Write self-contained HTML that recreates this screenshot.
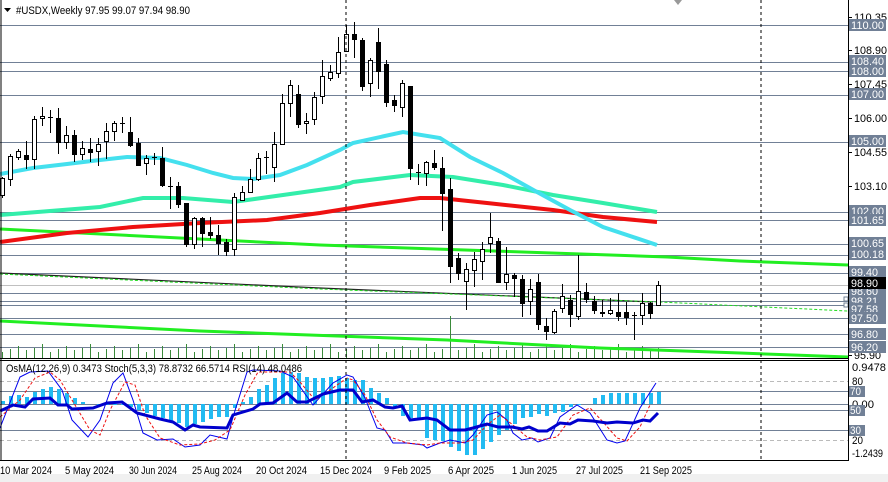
<!DOCTYPE html>
<html><head><meta charset="utf-8">
<style>
html,body{margin:0;padding:0;background:#fff;}
body{width:888px;height:482px;overflow:hidden;position:relative;font-family:"Liberation Sans",sans-serif;}
svg{position:absolute;left:0;top:0;}
</style></head><body>
<svg id="s" width="888" height="482" xmlns="http://www.w3.org/2000/svg" font-family="Liberation Sans, sans-serif" font-size="11">
<rect x="0" y="0" width="888" height="482" fill="#fff"/>
<rect x="0" y="474" width="888" height="8" fill="#f0f0f0"/>
<g id="hl"></g>
<g id="vol"></g>
<g id="ma" fill="none"></g>
<g id="cd"></g>
<g id="ind"></g>
<g id="ax"></g>
<line x1="761" y1="0" x2="761" y2="460" stroke="#000" stroke-dasharray="3,3"/>
<line x1="346" y1="0" x2="346" y2="460" stroke="#000" stroke-dasharray="3,3"/>
<line x1="1" y1="0" x2="1" y2="460" stroke="#000"/>
<line x1="848.5" y1="0" x2="848.5" y2="460" stroke="#000"/>
<line x1="0" y1="358.5" x2="849" y2="358.5" stroke="#000"/>
<line x1="0" y1="360.5" x2="849" y2="360.5" stroke="#000"/>
<line x1="0" y1="460.5" x2="849" y2="460.5" stroke="#000"/>
<polygon points="674,0 682,0 678,5" fill="#999"/>
<polygon points="4,8 11,8 7.5,12" fill="#000"/>
<text x="16" y="14" fill="#000" textLength="174" lengthAdjust="spacingAndGlyphs">#USDX,Weekly  97.95 99.07 97.94 98.90</text>
<text x="6" y="372" fill="#000" textLength="296" lengthAdjust="spacingAndGlyphs">OsMA(12,26,9) 0.3473   Stoch(5,3,3) 78.8732 66.5714   RSI(14) 48.0486</text>
<g font-size="11" fill="#000" id="dates"></g>
</svg>
<script>
var NS="http://www.w3.org/2000/svg";
function el(p,t,a,txt){var e=document.createElementNS(NS,t);for(var k in a)e.setAttribute(k,a[k]);if(txt!==undefined)e.textContent=txt;document.getElementById(p).appendChild(e);return e;}
[[0,52,"10 Mar 2024"],[65,49,"5 May 2024"],[129,48,"30 Jun 2024"],[192,50,"25 Aug 2024"],[256,51,"20 Oct 2024"],[320,52,"15 Dec 2024"],[384,47,"9 Feb 2025"],[448,46,"6 Apr 2025"],[512,45,"1 Jun 2025"],[576,47,"27 Jul 2025"],[640,52,"21 Sep 2025"]].forEach(function(d){el("dates","text",{x:d[0],y:474,textLength:d[1],lengthAdjust:"spacingAndGlyphs"},d[2]);});
var G="#718096";
[25,62,71,95,142,212,220,244,255,273,293,301,305,318,334,347].forEach(function(y){el("hl","line",{x1:0,x2:848,y1:y+.5,y2:y+.5,stroke:G});});
el("hl","line",{x1:0,x2:848,y1:285.5,y2:285.5,stroke:"#c0c0c0"});
for(var i=0;i<83;i++){var x=2+8*i;var h=[6,9,12,8,10,14][i%6];if(i==56)h=42;el("vol","line",{x1:x+.5,x2:x+.5,y1:358-h,y2:358,stroke:"#3a8a3a","stroke-width":1});}
function pl(p,pts,c,w,d){var a={points:pts,stroke:c,"stroke-width":w,fill:"none"};if(d)a["stroke-dasharray"]=d;el(p,"polyline",a);}
pl("ma","0,321 200,331 447,340 600,348 740,353 848,357","#22ee22",3);
pl("ma","0,273 320,288 653,302","#222",1.2);
pl("ma","0,274 320,289 660,302 848,311","#22dd22",1,"3,2");
pl("ma","0,229 320,245 667,257 740,261 848,265","#22ee22",3);
pl("ma","0,242 67,233 133,227 200,223 267,220 320,213 370,205 420,198 440,198 487,203 553,210 603,217 657,222","#ee1111",4);
pl("ma","0,215 100,207 143,198 183,198 233,202 283,195 340,187 353,182 410,175 453,177 503,185 553,195 603,203 657,212","#33eeaa",4);
pl("ma","0,174 33,168 67,164 100,160 127,157 160,158 187,165 213,173 233,178 253,179 280,175 307,165 340,150 353,143 403,132 440,138 470,157 503,173 537,192 570,210 603,227 657,245","#44e0ee",4);
var C=[[1,178,195,177,198],[1,156,179,154,186],[1,151,157,149,160],[0,155,159,141,169],[1,119,159,116,169],[1,116,118,107,126],[1,117,117,110,133],[0,118,142,108,154],[1,135,142,126,149],[0,135,154,130,162],[1,148,154,141,160],[0,149,152,138,162],[1,144,151,138,166],[1,131,141,123,159],[1,123,131,121,141],[1,123,123,117,133],[0,132,145,117,147],[0,143,165,138,166],[1,158,163,155,175],[1,157,157,153,165],[0,158,185,147,187],[1,186,186,177,209],[0,186,204,182,208],[0,203,244,203,247],[1,218,244,217,249],[0,218,233,217,247],[0,232,235,217,239],[0,235,243,225,255],[0,242,251,239,256],[1,197,249,193,256],[1,192,200,186,201],[1,179,192,169,192],[1,158,179,153,181],[1,157,157,151,174],[1,144,167,132,182],[1,103,144,94,144],[1,85,103,80,117],[0,94,124,85,128],[1,121,123,113,134],[1,97,119,92,125],[1,76,96,60,104],[1,72,78,65,81],[1,52,73,37,78],[1,34,51,25,52],[0,34,39,22,58],[0,40,86,38,91],[1,60,83,58,97],[0,42,71,28,89],[0,64,102,60,107],[0,100,105,95,112],[1,83,107,80,117],[0,86,168,86,180],[1,172,172,164,185],[1,162,173,161,186],[0,163,167,150,170],[0,168,193,157,231],[0,189,266,178,283],[0,258,273,253,280],[1,269,281,263,310],[1,259,270,252,287],[1,249,261,242,280],[1,237,243,213,253],[0,241,282,238,283],[1,274,282,247,290],[0,275,278,273,297],[0,279,303,275,317],[1,289,301,279,315],[0,282,324,274,330],[0,326,331,318,340],[1,311,332,309,334],[1,296,308,284,313],[0,300,314,295,327],[1,291,316,255,320],[0,292,299,283,303],[0,301,310,296,314],[0,312,313,300,317],[1,310,313,298,315],[0,312,316,293,321],[0,312,317,302,325],[1,315,315,312,340],[1,303,315,293,325],[0,303,313,302,319],[1,285,305,281,306]];
C.forEach(function(c,i){var x=2+8*i;el("cd","line",{x1:x+.5,x2:x+.5,y1:c[3],y2:c[4],stroke:"#000"});
 var h=c[2]-c[1];if(h<1){el("cd","line",{x1:x-2,x2:x+3,y1:c[1]+.5,y2:c[1]+.5,stroke:"#000"});}
 else if(c[0])el("cd","rect",{x:x-1.5,y:c[1]+.5,width:4,height:h,fill:"#fff",stroke:"#000"});
 else el("cd","rect",{x:x-2,y:c[1],width:5,height:h+1,fill:"#000"});});
[[381,1],[391,0],[404,0],[410,0],[430,0],[440,1]].forEach(function(a){el("ind","line",{x1:0,x2:848,y1:a[0]+.5,y2:a[0]+.5,stroke:a[1]?"#bbb":G,"stroke-dasharray":a[1]?"4,3":"none"});});
var H=[401,396,395,397,392,389,387,389,393,398,402,404,406,405,405,405,407,410,413,416,418,421,423,427,424,422,419,417,417,408,402,397,389,385,378,373,372,373,377,378,378,377,376,378,380,380,388,393,398,408,416,418,420,438,440,441,447,451,455,455,449,442,435,430,424,418,417,414,416,413,412,407,405,404,398,395,393,393,393,393,393,393,392,390,388];
H=H.slice(0,83);
H.forEach(function(v,i){var x=2+8*i;var t=Math.min(v,404),b=Math.max(v,404);if(b-t<1)return;el("ind","rect",{x:x-1,y:t,width:4,height:b-t,fill:"#22bbf2"});});
pl("ind","0,428 20,377 30,372 48,371 62,390 72,420 88,437 100,420 113,383 123,373 133,400 143,433 157,440 173,439 185,447 200,445 210,435 227,439 233,417 247,372 253,370 280,371 293,377 313,405 333,383 347,375 353,377 365,398 377,428 385,430 393,443 407,443 423,445 427,448 440,443 450,440 465,443 473,435 487,415 497,412 507,420 513,433 522,440 532,438 538,442 550,438 560,417 577,405 590,413 607,440 617,443 625,441 640,408 656,383","#0000ee",1);
pl("ind","0,417 20,400 35,378 50,372 60,380 75,405 90,430 100,435 110,410 125,382 135,385 145,415 160,438 180,445 200,444 215,440 230,430 245,395 258,372 275,372 290,372 300,382 315,400 330,390 347,378 353,380 365,395 377,420 390,437 407,443 427,445 440,443 460,443 473,440 487,425 500,415 513,425 527,437 540,440 557,437 573,415 590,408 603,422 617,438 627,441 640,427 650,405","#ee1111",1,"3,2");
pl("ind","0,411 13,405 25,407 33,399 50,398 58,405 67,405 72,409 93,408 107,403 122,402 137,413 160,419 173,422 185,430 193,425 200,427 227,428 233,415 253,409 260,404 273,403 287,393 297,402 307,402 323,394 340,390 353,390 362,402 373,400 385,407 393,408 402,406 410,420 427,418 437,420 450,430 465,430 473,428 487,424 498,427 512,427 522,429 529,427 538,431 547,431 560,423 570,424 578,420 593,421 607,423 617,422 633,423 643,420 650,421 658,413","#0000cc",3);
function lbl(x,y,t,c,w){var a={x:x,y:y,fill:c};if(w){a.textLength=w;a.lengthAdjust="spacingAndGlyphs";}return el("ax","text",a,t);}
function tick(y,t){el("ax","line",{x1:849,x2:852,y1:y+.5,y2:y+.5,stroke:"#000"});lbl(854,y+4,t,"#000",t.length>5?33:27);}
function box(y,t,bg){el("ax","rect",{x:849,y:y-6,width:37,height:12,fill:bg||"#718096"});lbl(851,y+4,t,"#fff",t.length>5?33:27);}
tick(17,"110.35");tick(50,"108.90");tick(84,"107.45");tick(118,"106.00");tick(152,"104.55");tick(186,"103.10");tick(318,"97.30");tick(355,"95.90");
[[25,"110.00"],[61,"108.40"],[71,"108.00"],[94,"107.00"],[141,"105.00"],[211,"102.00"],[220,"101.65"],[243,"100.65"],[254,"100.18"],[272,"99.40"],[291,"98.60"],[301,"98.21"],[309,"97.58"],[318,"97.50"],[334,"96.80"],[347,"96.20"]].forEach(function(a){box(a[0],a[1]);});
box(283,"98.90","#000");
el("ax","rect",{x:844,y:297,width:4,height:4,fill:"#fff",stroke:G});
el("ax","rect",{x:844,y:303,width:4,height:4,fill:"#fff",stroke:G});
lbl(852,371,"0.9478","#000",34);
lbl(852,385,"80","#000",11);
el("ax","rect",{x:849,y:386,width:16,height:11,fill:"#718096"});lbl(850,395,"70","#fff",11);
lbl(852,408,"0.00","#000",22);
el("ax","rect",{x:849,y:405,width:16,height:11,fill:"#718096"});lbl(850,414,"50","#fff",11);
el("ax","rect",{x:849,y:425,width:16,height:11,fill:"#718096"});lbl(850,434,"30","#fff",11);
lbl(852,444,"20","#000",11);
lbl(852,457,"-1.2439","#000",31);
</script>
</body></html>
